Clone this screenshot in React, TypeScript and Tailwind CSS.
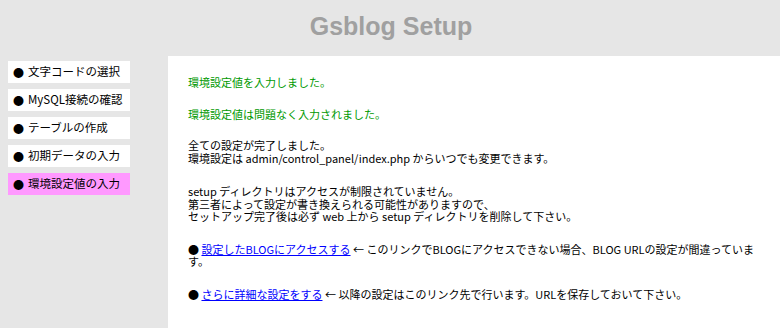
const menu = [
  { label: "文字コードの選択", active: false },
  { label: "MySQL接続の確認", active: false },
  { label: "テーブルの作成", active: false },
  { label: "初期データの入力", active: false },
  { label: "環境設定値の入力", active: true },
];

const jp = "font-['Noto_Sans_CJK_JP','Liberation_Sans',sans-serif]";

export default function App() {
  return (
    <div className={`min-h-[328px] w-[780px] bg-[#e6e6e6] ${jp} text-[11px] text-black`}>
      <header className="flex h-[56px] items-center justify-center">
        <h1 className="pb-[4px] pl-[2px] font-['Liberation_Sans',sans-serif] text-[25px] font-bold leading-none text-[#a0a0a0]">
          Gsblog Setup
        </h1>
      </header>

      <div className="flex">
        <nav className="flex w-[168px] shrink-0 flex-col gap-[6px] pl-[8px] pt-[5px]">
          {menu.map((item) => (
            <div
              key={item.label}
              className={`flex h-[22px] w-[122px] items-center gap-[4px] pl-[5px] ${
                item.active ? "bg-[#ff99ff]" : "bg-white"
              }`}
            >
              <span className="text-[11px] leading-none">●</span>
              <span className="whitespace-nowrap text-[11.5px] leading-none">{item.label}</span>
            </div>
          ))}
        </nav>

        <main className="min-h-[272px] flex-1 bg-white pb-[20px] pl-[20px] pr-[10px] pt-[20px] leading-[12.5px]">
          <p className="text-[#009900]">環境設定値を入力しました。</p>
          <p className="mt-[19px] text-[#009900]">環境設定値は問題なく入力されました。</p>
          <p className="mt-[19px]">
            全ての設定が完了しました。
            <br />
            環境設定は admin/control_panel/index.php からいつでも変更できます。
          </p>
          <p className="mt-[21px]">
            setup ディレクトリはアクセスが制限されていません。
            <br />
            第三者によって設定が書き換えられる可能性がありますので、
            <br />
            セットアップ完了後は必ず web 上から setup ディレクトリを削除して下さい。
          </p>
          <p className="mt-[20px]">
            ● <a href="#" className="text-[#0000ff] underline">設定したBLOGにアクセスする</a> ← このリンクでBLOGにアクセスできない場合、BLOG URLの設定が間違っています。
          </p>
          <p className="mt-[20px]">
            ● <a href="#" className="text-[#0000ff] underline">さらに詳細な設定をする</a> ← 以降の設定はこのリンク先で行います。URLを保存しておいて下さい。
          </p>
        </main>
      </div>
    </div>
  );
}
